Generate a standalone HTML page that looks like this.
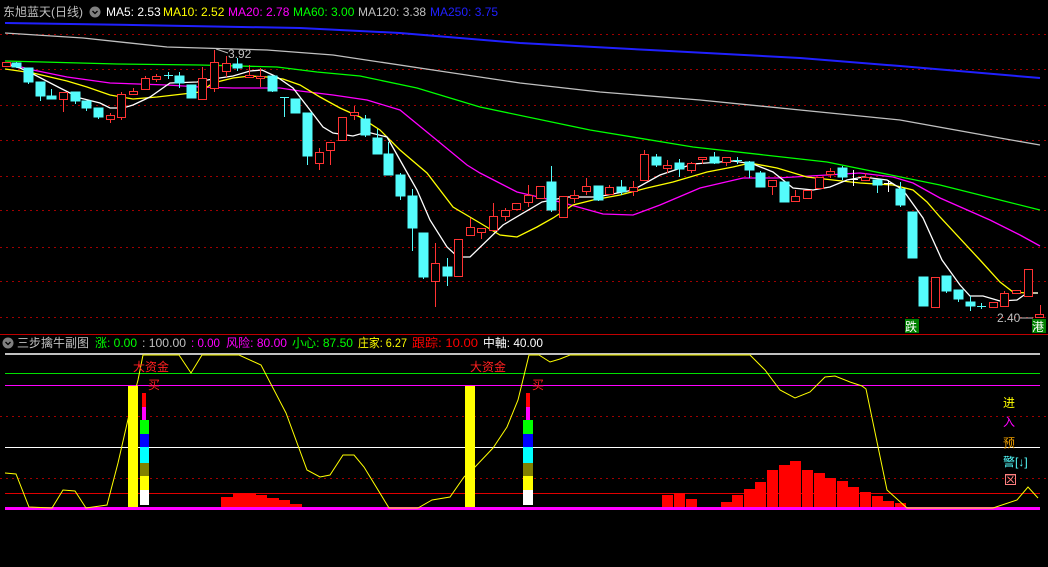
<!DOCTYPE html>
<html><head><meta charset="utf-8"><style>
html,body{margin:0;padding:0;background:#000;width:1048px;height:567px;overflow:hidden}
svg{display:block}
text{font-family:"Liberation Sans","Noto Sans CJK SC",sans-serif;font-size:12px}
</style></head><body>
<svg width="1048" height="567" viewBox="0 0 1048 567" xmlns="http://www.w3.org/2000/svg">
<rect width="1048" height="567" fill="#000"/>
<g stroke="#a00000" stroke-dasharray="2,4" stroke-width="1">
<line x1="0" y1="34.5" x2="1048" y2="34.5"/><line x1="0" y1="69.5" x2="1048" y2="69.5"/>
<line x1="0" y1="105.5" x2="1048" y2="105.5"/><line x1="0" y1="140.5" x2="1048" y2="140.5"/>
<line x1="0" y1="176.5" x2="1048" y2="176.5"/><line x1="0" y1="210.5" x2="1048" y2="210.5"/>
<line x1="0" y1="247.5" x2="1048" y2="247.5"/><line x1="0" y1="281.5" x2="1048" y2="281.5"/>
<line x1="0" y1="317.5" x2="1048" y2="317.5"/>
<line x1="0" y1="416.5" x2="1048" y2="416.5"/><line x1="0" y1="478.5" x2="1048" y2="478.5"/>
</g>
<line x1="0" y1="334.5" x2="1048" y2="334.5" stroke="#c00000"/>
<g fill="none" stroke-width="1.3">
<polyline stroke="#2020ff" stroke-width="2" points="5,23 133,25 300,28 400,33 520,43 650,50 800,58 900,66 1040,78"/>
<polyline stroke="#c0c0c0" points="5,33 83,38 167,47 267,50 333,55 433,70 520,83 600,92 700,100 800,110 900,120 1000,138 1040,145"/>
<polyline stroke="#00ff00" points="5,61 43,62 117,64 200,65 277,67 317,72 360,76 417,88 480,107 590,130 693,147 827,162 940,185 1000,200 1040,210"/>
<polyline stroke="#ff00ff" points="5,63 33,70 67,77 110,83 167,85 200,87 233,88 280,88 300,91 333,95 367,100 400,110 433,137 467,165 480,173 517,192 560,202 603,214 633,215 660,205 700,188 743,178 777,178 827,175 860,173 893,177 913,183 940,198 990,220 1020,235 1040,246"/>
<polyline stroke="#ffff00" points="5,69 33,73 67,81 87,87 110,95 133,99 157,97 183,94 200,92 213,83 233,78 250,76 267,77 283,79 300,85 320,97 340,108 360,117 380,130 400,150 427,173 453,207 480,223 500,235 517,237 537,227 553,218 573,205 593,200 620,195 647,188 673,182 707,172 733,167 750,163 777,168 807,177 833,180 860,183 893,185 913,190 927,202 940,217 980,260 1000,282 1013,292 1027,293 1038,293"/>
<polyline stroke="#ffffff" points="5,64 20,68 33,74 60,88 80,98 100,103 110,108 123,108 133,105 150,97 170,83 197,82 213,79 233,76 250,71 262,70 277,77 293,88 310,110 323,127 333,133 353,136 367,132 387,137 400,160 417,190 430,220 447,247 458,257 470,257 503,225 542,202 567,197 597,197 633,190 660,175 693,164 733,161 753,164 773,172 793,188 813,190 830,187 847,180 863,177 887,180 903,190 923,218 942,260 960,285 970,296 983,296 1000,301 1017,300 1027,293 1038,293"/>
</g>
<g stroke-width="1">
<g stroke="#54fcfc" fill="#54fcfc">
<line x1="16.5" y1="62" x2="16.5" y2="68"/><rect x="12" y="63" width="9" height="4"/>
<line x1="28.5" y1="68" x2="28.5" y2="84"/><rect x="24" y="68" width="9" height="14"/>
<line x1="40.5" y1="82" x2="40.5" y2="101"/><rect x="36" y="82" width="9" height="14"/>
<line x1="51.5" y1="89" x2="51.5" y2="99"/><rect x="47" y="96" width="9" height="3"/>
<line x1="75.5" y1="92" x2="75.5" y2="104"/><rect x="71" y="92" width="9" height="9"/>
<line x1="86.5" y1="101" x2="86.5" y2="111"/><rect x="82" y="101" width="9" height="7"/>
<line x1="98.5" y1="108" x2="98.5" y2="119"/><rect x="94" y="108" width="9" height="9"/>
<line x1="168.5" y1="72" x2="168.5" y2="79"/><line x1="164" y1="75.5" x2="173" y2="75.5"/>
<line x1="179.5" y1="72" x2="179.5" y2="88"/><rect x="175" y="76" width="9" height="7"/>
<rect x="187" y="85" width="9" height="13"/>
<line x1="237.5" y1="58" x2="237.5" y2="71"/><rect x="233" y="64" width="9" height="4"/>
<line x1="272.5" y1="76" x2="272.5" y2="92"/><rect x="268" y="76" width="9" height="15"/>
<line x1="284.5" y1="97" x2="284.5" y2="117"/><line x1="280" y1="97.5" x2="289" y2="97.5"/>
<rect x="291" y="99" width="9" height="14"/>
<line x1="307.5" y1="113" x2="307.5" y2="165"/><rect x="303" y="113" width="9" height="43"/>
<line x1="365.5" y1="115" x2="365.5" y2="137"/><rect x="361" y="119" width="9" height="16"/>
<line x1="377.5" y1="129" x2="377.5" y2="154"/><rect x="373" y="138" width="9" height="16"/>
<line x1="388.5" y1="142" x2="388.5" y2="175"/><rect x="384" y="154" width="9" height="21"/>
<line x1="400.5" y1="173" x2="400.5" y2="200"/><rect x="396" y="175" width="9" height="21"/>
<line x1="412.5" y1="189" x2="412.5" y2="251"/><rect x="408" y="196" width="9" height="32"/>
<line x1="423.5" y1="233" x2="423.5" y2="279"/><rect x="419" y="233" width="9" height="44"/>
<line x1="447.5" y1="258" x2="447.5" y2="286"/><rect x="443" y="267" width="9" height="9"/>
<line x1="551.5" y1="166" x2="551.5" y2="212"/><rect x="547" y="182" width="9" height="28"/>
<line x1="598.5" y1="186" x2="598.5" y2="201"/><rect x="594" y="186" width="9" height="14"/>
<line x1="621.5" y1="180" x2="621.5" y2="195"/><rect x="617" y="187" width="9" height="5"/>
<line x1="656.5" y1="154" x2="656.5" y2="167"/><rect x="652" y="157" width="9" height="8"/>
<line x1="679.5" y1="159" x2="679.5" y2="177"/><rect x="675" y="163" width="9" height="6"/>
<line x1="714.5" y1="152" x2="714.5" y2="164"/><rect x="710" y="157" width="9" height="6"/>
<line x1="737.5" y1="157" x2="737.5" y2="164"/><line x1="733" y1="160.5" x2="742" y2="160.5"/>
<line x1="749.5" y1="161" x2="749.5" y2="178"/><rect x="745" y="162" width="9" height="8"/>
<line x1="760.5" y1="171" x2="760.5" y2="187"/><rect x="756" y="173" width="9" height="14"/>
<rect x="780" y="182" width="9" height="20"/>
<line x1="842.5" y1="166" x2="842.5" y2="180"/><rect x="838" y="168" width="9" height="9"/>
<line x1="877.5" y1="180" x2="877.5" y2="193"/><rect x="873" y="180" width="9" height="5"/>
<line x1="900.5" y1="182" x2="900.5" y2="207"/><rect x="896" y="189" width="9" height="16"/>
<rect x="908" y="212" width="9" height="46"/>
<rect x="919" y="277" width="9" height="29"/>
<line x1="946.5" y1="276" x2="946.5" y2="293"/><rect x="942" y="276" width="9" height="15"/>
<line x1="958.5" y1="290" x2="958.5" y2="302"/><rect x="954" y="290" width="9" height="9"/>
<line x1="970.5" y1="296" x2="970.5" y2="311"/><rect x="966" y="302" width="9" height="4"/>
<line x1="981.5" y1="303" x2="981.5" y2="309"/><line x1="977" y1="306.5" x2="986" y2="306.5"/>
</g>
<g stroke="#fff">
<line x1="853.5" y1="170" x2="853.5" y2="186"/><line x1="849" y1="179.5" x2="858" y2="179.5"/>
<line x1="888.5" y1="180" x2="888.5" y2="192"/><line x1="884" y1="183.5" x2="893" y2="183.5"/>
</g>
<g stroke="#ff3333" fill="#000">
<rect x="2.5" y="62.5" width="8" height="4"/>
<line x1="63.5" y1="92" x2="63.5" y2="112"/><rect x="59.5" y="92.5" width="8" height="7"/>
<line x1="110.5" y1="113" x2="110.5" y2="123"/><rect x="106.5" y="115.5" width="8" height="4"/>
<line x1="121.5" y1="92" x2="121.5" y2="120"/><rect x="117.5" y="94.5" width="8" height="23"/>
<line x1="133.5" y1="88" x2="133.5" y2="95"/><rect x="129.5" y="91.5" width="8" height="3"/>
<line x1="145.5" y1="76" x2="145.5" y2="90"/><rect x="141.5" y="78.5" width="8" height="11"/>
<line x1="156.5" y1="74" x2="156.5" y2="82"/><rect x="152.5" y="76.5" width="8" height="3"/>
<line x1="202.5" y1="67" x2="202.5" y2="100"/><rect x="198.5" y="78.5" width="8" height="21"/>
<line x1="214.5" y1="50" x2="214.5" y2="92"/><rect x="210.5" y="62.5" width="8" height="26"/>
<line x1="226.5" y1="56" x2="226.5" y2="77"/><rect x="222.5" y="63.5" width="8" height="8"/>
<line x1="249.5" y1="65" x2="249.5" y2="78"/><rect x="245.5" y="75.5" width="8" height="2"/>
<line x1="260.5" y1="68" x2="260.5" y2="87"/><rect x="256.5" y="76.5" width="8" height="2"/>
<line x1="319.5" y1="148" x2="319.5" y2="170"/><rect x="315.5" y="152.5" width="8" height="11"/>
<line x1="330.5" y1="142" x2="330.5" y2="165"/><rect x="326.5" y="142.5" width="8" height="8"/>
<rect x="338.5" y="117.5" width="8" height="23"/>
<line x1="354.5" y1="106" x2="354.5" y2="120"/><rect x="350.5" y="112.5" width="8" height="3"/>
<line x1="435.5" y1="243" x2="435.5" y2="307"/><rect x="431.5" y="263.5" width="8" height="18"/>
<rect x="454.5" y="239.5" width="8" height="37"/>
<line x1="470.5" y1="218" x2="470.5" y2="236"/><rect x="466.5" y="227.5" width="8" height="8"/>
<line x1="481.5" y1="228" x2="481.5" y2="239"/><rect x="477.5" y="228.5" width="8" height="4"/>
<line x1="493.5" y1="203" x2="493.5" y2="231"/><rect x="489.5" y="216.5" width="8" height="14"/>
<line x1="505.5" y1="208" x2="505.5" y2="221"/><rect x="501.5" y="210.5" width="8" height="6"/>
<rect x="512.5" y="203.5" width="8" height="6"/>
<line x1="528.5" y1="185" x2="528.5" y2="207"/><rect x="524.5" y="195.5" width="8" height="7"/>
<rect x="536.5" y="186.5" width="8" height="12"/>
<rect x="559.5" y="196.5" width="8" height="21"/>
<line x1="574.5" y1="190" x2="574.5" y2="203"/><rect x="570.5" y="195.5" width="8" height="3"/>
<line x1="586.5" y1="178" x2="586.5" y2="195"/><rect x="582.5" y="186.5" width="8" height="5"/>
<line x1="609.5" y1="185" x2="609.5" y2="195"/><rect x="605.5" y="187.5" width="8" height="7"/>
<line x1="633.5" y1="181" x2="633.5" y2="196"/><rect x="629.5" y="187.5" width="8" height="4"/>
<line x1="644.5" y1="150" x2="644.5" y2="181"/><rect x="640.5" y="154.5" width="8" height="26"/>
<line x1="667.5" y1="160" x2="667.5" y2="173"/><rect x="663.5" y="165.5" width="8" height="3"/>
<line x1="691.5" y1="162" x2="691.5" y2="173"/><rect x="687.5" y="163.5" width="8" height="7"/>
<line x1="702.5" y1="157" x2="702.5" y2="164"/><rect x="698.5" y="157.5" width="8" height="2"/>
<line x1="726.5" y1="157" x2="726.5" y2="166"/><rect x="722.5" y="157.5" width="8" height="5"/>
<line x1="772.5" y1="180" x2="772.5" y2="195"/><rect x="768.5" y="180.5" width="8" height="6"/>
<line x1="795.5" y1="190" x2="795.5" y2="202"/><rect x="791.5" y="196.5" width="8" height="5"/>
<rect x="803.5" y="190.5" width="8" height="8"/>
<rect x="815.5" y="177.5" width="8" height="11"/>
<line x1="830.5" y1="168" x2="830.5" y2="178"/><rect x="826.5" y="171.5" width="8" height="3"/>
<line x1="865.5" y1="173" x2="865.5" y2="181"/><rect x="861.5" y="177.5" width="8" height="3"/>
<rect x="931.5" y="277.5" width="8" height="30"/>
<rect x="989.5" y="302.5" width="8" height="5"/>
<line x1="1004.5" y1="291" x2="1004.5" y2="307"/><rect x="1000.5" y="293.5" width="8" height="13"/>
<rect x="1012.5" y="290.5" width="8" height="3"/>
<rect x="1024.5" y="269.5" width="8" height="27"/>
<line x1="1040.5" y1="305" x2="1040.5" y2="314"/><rect x="1035.5" y="314.5" width="8" height="3"/>
</g>
</g>
<line x1="216" y1="49" x2="228" y2="53" stroke="#c0c0c0"/>
<text x="228" y="58" fill="#c0c0c0">3.92</text>
<text x="997" y="322" fill="#c0c0c0">2.40</text>
<line x1="1020" y1="318" x2="1033" y2="318" stroke="#c0c0c0"/>
<rect x="905" y="319" width="14" height="14" fill="#008000"/>
<text x="905" y="331" fill="#fff">跌</text>
<rect x="1032" y="319" width="14" height="14" fill="#008000"/>
<text x="1032" y="331" fill="#fff">港</text>
<text x="3" y="16" fill="#c0c0c0" font-size="13" textLength="80" lengthAdjust="spacingAndGlyphs">东旭蓝天(日线)</text>
<circle cx="95" cy="12" r="5.5" fill="#808080"/><path d="M92.5 11 L95 13.5 L97.5 11" stroke="#000" fill="none" stroke-width="1.3"/>
<text x="106" y="16" fill="#fff">MA5: 2.53</text>
<text x="163" y="16" fill="#ffff00">MA10: 2.52</text>
<text x="228" y="16" fill="#ff00ff">MA20: 2.78</text>
<text x="293" y="16" fill="#00ff00">MA60: 3.00</text>
<text x="358" y="16" fill="#c0c0c0">MA120: 3.38</text>
<text x="430" y="16" fill="#2020ff">MA250: 3.75</text>
<circle cx="8" cy="343" r="5.5" fill="#808080"/><path d="M5.5 342 L8 344.5 L10.5 342" stroke="#000" fill="none" stroke-width="1.3"/>
<text x="17" y="347" fill="#c0c0c0" textLength="72" lengthAdjust="spacingAndGlyphs">三步擒牛副图</text>
<text x="95" y="347" fill="#00ff00" textLength="42" lengthAdjust="spacingAndGlyphs">涨: 0.00</text>
<text x="142" y="347" fill="#c0c0c0" textLength="44" lengthAdjust="spacingAndGlyphs">: 100.00</text>
<text x="191" y="347" fill="#ff00ff" textLength="29" lengthAdjust="spacingAndGlyphs">: 0.00</text>
<text x="226" y="347" fill="#ff00ff" textLength="61" lengthAdjust="spacingAndGlyphs">风险: 80.00</text>
<text x="292" y="347" fill="#00ff00" textLength="61" lengthAdjust="spacingAndGlyphs">小心: 87.50</text>
<text x="358" y="347" fill="#ffff00" textLength="49" lengthAdjust="spacingAndGlyphs">庄家: 6.27</text>
<text x="412" y="347" fill="#ff0000" textLength="66" lengthAdjust="spacingAndGlyphs">跟踪: 10.00</text>
<text x="483" y="347" fill="#fff" textLength="60" lengthAdjust="spacingAndGlyphs">中軸: 40.00</text>
<line x1="5" y1="354" x2="1040" y2="354" stroke="#c0c0c0" stroke-width="2"/>
<line x1="5" y1="373.5" x2="1040" y2="373.5" stroke="#00e000"/>
<line x1="5" y1="385.5" x2="1040" y2="385.5" stroke="#ff00ff"/>
<line x1="5" y1="447.5" x2="1040" y2="447.5" stroke="#fff"/>
<line x1="5" y1="493.5" x2="1040" y2="493.5" stroke="#e00000"/>
<g fill="#ff0000">
<rect x="221" y="497" width="12" height="11"/><rect x="233" y="493" width="11" height="15"/><rect x="244" y="493" width="12" height="15"/><rect x="256" y="495" width="11" height="13"/><rect x="267" y="498" width="12" height="10"/><rect x="279" y="500" width="11" height="8"/><rect x="290" y="504" width="12" height="4"/>
<rect x="662" y="495" width="11" height="13"/><rect x="674" y="493" width="11" height="15"/><rect x="686" y="499" width="11" height="9"/>
<rect x="721" y="502" width="11" height="6"/><rect x="732" y="495" width="11" height="13"/><rect x="744" y="489" width="11" height="19"/><rect x="755" y="482" width="11" height="26"/><rect x="767" y="470" width="11" height="38"/><rect x="779" y="465" width="11" height="43"/><rect x="790" y="461" width="11" height="47"/><rect x="802" y="470" width="11" height="38"/><rect x="814" y="473" width="11" height="35"/><rect x="825" y="478" width="11" height="30"/><rect x="837" y="481" width="11" height="27"/><rect x="848" y="487" width="11" height="21"/><rect x="860" y="492" width="11" height="16"/><rect x="872" y="496" width="11" height="12"/><rect x="883" y="501" width="11" height="7"/><rect x="895" y="503" width="11" height="5"/>
</g>
<rect x="128" y="386" width="10" height="122" fill="#ffff00"/>
<rect x="465" y="386" width="10" height="122" fill="#ffff00"/>
<g>
<rect x="142" y="393" width="4" height="14" fill="#ff0000"/><rect x="142" y="407" width="4" height="13" fill="#ff00ff"/>
<rect x="140" y="420" width="9" height="14" fill="#00ff00"/><rect x="140" y="434" width="9" height="13" fill="#0000ff"/>
<rect x="140" y="447" width="9" height="16" fill="#00ffff"/><rect x="140" y="463" width="9" height="13" fill="#808000"/>
<rect x="140" y="476" width="9" height="14" fill="#ffff00"/><rect x="140" y="490" width="9" height="15" fill="#fff"/>
<rect x="526" y="393" width="4" height="14" fill="#ff0000"/><rect x="526" y="407" width="4" height="13" fill="#ff00ff"/>
<rect x="523" y="420" width="10" height="14" fill="#00ff00"/><rect x="523" y="434" width="10" height="13" fill="#0000ff"/>
<rect x="523" y="447" width="10" height="16" fill="#00ffff"/><rect x="523" y="463" width="10" height="13" fill="#808000"/>
<rect x="523" y="476" width="10" height="14" fill="#ffff00"/><rect x="523" y="490" width="10" height="15" fill="#fff"/>
</g>
<line x1="5" y1="508.5" x2="1040" y2="508.5" stroke="#ff00ff" stroke-width="3"/>
<polyline fill="none" stroke="#ffff00" stroke-width="1" points="5,473 16,474 29,507 52,508 63,490 75,491 86,508 107,505 118,463 129,415 138,380 143,355 179,355 191,373 202,355 239,355 261,365 286,413 307,470 320,477 330,475 343,455 354,455 364,467 389,508 418,508 432,500 450,497 464,477 475,467 493,448 507,427 518,400 529,355 539,355 550,362 560,359 570,355 750,355 765,370 780,390 795,398 810,392 825,377 835,376 850,382 862,386 866,389 887,490 907,508 993,508 1017,500 1028,487 1038,498"/>
<text x="133" y="371" fill="#ff2020">大资金</text>
<text x="148" y="389" fill="#ff2020">买</text>
<text x="470" y="371" fill="#ff2020">大资金</text>
<text x="532" y="389" fill="#ff2020">买</text>
<text x="1003" y="407" fill="#ffff00">进</text>
<text x="1003" y="426" fill="#ff00ff">入</text>
<text x="1003" y="447" fill="#f0a000">预</text>
<text x="1003" y="466" fill="#54fcfc">警[↓]</text>
<rect x="1005.5" y="474.5" width="10" height="10" fill="none" stroke="#ff8080"/>
<text x="1004" y="484" fill="#ff8080">区</text>
</svg>
</body></html>
